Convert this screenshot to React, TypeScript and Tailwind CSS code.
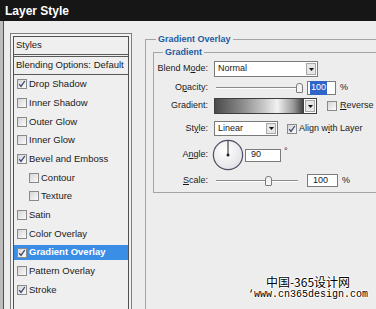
import React from "react";

type Effect = { name: string; checked?: boolean; sub?: boolean; active?: boolean };

const effects: Effect[] = [
  { name: "Drop Shadow", checked: true },
  { name: "Inner Shadow" },
  { name: "Outer Glow" },
  { name: "Inner Glow" },
  { name: "Bevel and Emboss", checked: true },
  { name: "Contour", sub: true },
  { name: "Texture", sub: true },
  { name: "Satin" },
  { name: "Color Overlay" },
  { name: "Gradient Overlay", checked: true, active: true },
  { name: "Pattern Overlay" },
  { name: "Stroke", checked: true },
];

const Check = ({ checked }: { checked?: boolean }) => (
  <span className="flex h-[10px] w-[10px] shrink-0 items-center justify-center border border-[#8a8a8a] bg-linear-to-br from-[#d6d6d6] to-[#fbfbfb]">
    {checked && (
      <svg width="8" height="8" viewBox="0 0 8 8">
        <path d="M1.2 4.2 L3 6.4 L6.8 1" fill="none" stroke="#3a4670" strokeWidth="1.3" />
      </svg>
    )}
  </span>
);

const DropBtn = () => (
  <span className="m-[1px] flex w-[10px] items-center justify-center self-stretch border border-[#a8a8a8] bg-[#e6e6e6]">
    <svg width="5" height="3" viewBox="0 0 5 3">
      <path d="M0 0H5L2.5 3Z" fill="#111" />
    </svg>
  </span>
);

const Label = ({ children }: { children: React.ReactNode }) => (
  <span className="w-[54px] shrink-0 text-right">{children}</span>
);

const U = ({ children }: { children: React.ReactNode }) => <span className="underline">{children}</span>;

const Track = ({ w }: { w: number }) => (
  <span className="h-[2px] border-t border-b border-t-[#8a8a8a] border-b-white" style={{ width: w }} />
);

const Thumb = () => (
  <span className="h-[10px] w-[7px] rounded-t-[3px] rounded-b-[1px] border border-[#7c7c7c] bg-[#f3f3f3]" />
);

const App = () => {
  return (
    <div className="relative flex h-[309px] w-[376px] flex-col overflow-hidden bg-[#bdbdbd] font-['Liberation_Sans',Arial,sans-serif] text-[#1a1a1a]">
      <div className="flex h-[21px] shrink-0 items-center bg-[#161616] pl-[5px] text-[12px] font-bold text-white">
        Layer Style
      </div>
      <div className="flex flex-1 pl-[3px]">
        <div className="flex flex-1 border-l border-[#4f4f4f] bg-[#ededed]">
          {/* styles list */}
          <div className="ml-[6px] mt-[12px] h-[290px] w-[122px] shrink-0 border border-[#7d7d7d] bg-[#f3f3f3] p-[2px]">
            <div className="h-full border border-[#4f4f4f] bg-[#efefef] text-[9.5px]">
              <div className="flex h-[18px] items-center border-b border-[#5a5a5a] pl-[2px]">Styles</div>
              <div className="mt-[1px] flex h-[19px] items-center border-t border-b border-[#5a5a5a] pl-[2px]">
                Blending Options: Default
              </div>
              {effects.map((e) => (
                <div key={e.name} className="h-[18.7px] py-[1.5px]">
                  <div
                    className={`flex h-full items-center ${e.sub ? "pl-[15px]" : "pl-[3px]"} ${
                      e.active ? "bg-[#3a8ee6] font-bold text-white" : ""
                    }`}
                  >
                    <Check checked={e.checked} />
                    <span className="ml-[2px]">{e.name}</span>
                  </div>
                </div>
              ))}
            </div>
          </div>

          {/* settings */}
          <div className="ml-[13px] mt-[12px] text-[9px]">
            <fieldset className="h-[300px] w-[250px] border border-[#a3a3a3] pl-[7px] pt-[1px]">
              <legend className="ml-[3px] px-[2px] text-[9px] leading-[12px] font-bold text-[#1d5ca3]">
                Gradient Overlay
              </legend>
              <fieldset className="w-[240px] border border-[#a3a3a3] pb-[5px] pt-[3px]">
                <legend className="ml-[9px] px-[2px] text-[9px] leading-[12px] font-bold text-[#1d5ca3]">
                  Gradient
                </legend>

                <div className="flex h-[16px] items-center">
                  <Label>
                    Blend M<U>o</U>de:
                  </Label>
                  <div className="ml-[6px] flex h-[16px] w-[104px] items-center border border-[#7a7a7a] bg-white">
                    <span className="flex-1 pl-[3px]">Normal</span>
                    <DropBtn />
                  </div>
                </div>

                <div className="mt-[4px] flex h-[14px] items-center">
                  <Label>
                    O<U>p</U>acity:
                  </Label>
                  <span className="ml-[8px] flex items-center">
                    <Track w={80} />
                    <Thumb />
                  </span>
                  <div className="ml-[4px] flex h-[14px] w-[29px] items-center border border-[#7a7a7a] bg-white pl-[2px]">
                    <span className="bg-[#2f64c8] px-[1px] text-white">100</span>
                  </div>
                  <span className="ml-[4px]">%</span>
                </div>

                <div className="mt-[3px] flex h-[16px] items-center">
                  <Label>Gradient:</Label>
                  <div className="ml-[6px] flex h-[16px] w-[103px] border border-[#3e3e3e] bg-white">
                    <span className="flex-1 bg-[linear-gradient(90deg,#4a4a4a_0%,#8a8a8a_30%,#c8c8c8_55%,#f2f2f2_70%,#9a9a9a_88%,#3a3a3a_100%)]" />
                    <DropBtn />
                  </div>
                  <span className="ml-[10px]">
                    <Check />
                  </span>
                  <span className="ml-[3px]">
                    <U>R</U>everse
                  </span>
                </div>

                <div className="mt-[7px] flex h-[15px] items-center">
                  <Label>
                    St<U>y</U>le:
                  </Label>
                  <div className="ml-[6px] flex h-[15px] w-[64px] items-center border border-[#7a7a7a] bg-white">
                    <span className="flex-1 pl-[3px]">Linear</span>
                    <DropBtn />
                  </div>
                  <span className="ml-[9px]">
                    <Check checked />
                  </span>
                  <span className="ml-[2px]">
                    Align w<U>i</U>th Layer
                  </span>
                </div>

                <div className="mt-[3px] flex h-[32px] items-center">
                  <Label>
                    A<U>n</U>gle:
                  </Label>
                  <svg className="ml-[4px]" width="32" height="32" viewBox="0 0 32 32">
                    <defs>
                      <radialGradient id="dial" cx="40%" cy="35%" r="70%">
                        <stop offset="0%" stopColor="#ffffff" />
                        <stop offset="100%" stopColor="#e2e2e6" />
                      </radialGradient>
                    </defs>
                    <circle cx="16" cy="16" r="14.6" fill="url(#dial)" stroke="#4c4f62" strokeWidth="1.2" />
                    <line x1="16" y1="16" x2="16" y2="1.8" stroke="#222" strokeWidth="1" />
                    <circle cx="16" cy="16" r="1.5" fill="#222" />
                  </svg>
                  <div className="ml-[1px] flex h-[13px] w-[36px] items-center border border-[#7a7a7a] bg-white pl-[5px]">
                    90
                  </div>
                  <span className="ml-[3px] self-start pt-[6px]">°</span>
                </div>

                <div className="mt-[3px] flex h-[13px] items-center">
                  <Label>
                    <U>S</U>cale:
                  </Label>
                  <span className="ml-[8px] flex items-center">
                    <Track w={49} />
                    <Thumb />
                    <Track w={26} />
                  </span>
                  <div className="ml-[9px] flex h-[13px] w-[31px] items-center border border-[#7a7a7a] bg-white pl-[5px]">
                    100
                  </div>
                  <span className="ml-[4px]">%</span>
                </div>
              </fieldset>
            </fieldset>
          </div>
        </div>
      </div>

      {/* watermark */}
      <div className="absolute left-[248px] top-[274px] flex flex-col items-center text-black [text-shadow:1px_0_#fff,-1px_0_#fff,0_1px_#fff,0_-1px_#fff]">
        <span className="font-['Noto_Sans_CJK_SC',sans-serif] text-[12px] leading-[15px]">中国-365设计网</span>
        <span className="font-['Liberation_Mono',monospace] text-[10px] leading-[12px]">‘www.cn365design.com</span>
      </div>
    </div>
  );
};

export default App;
